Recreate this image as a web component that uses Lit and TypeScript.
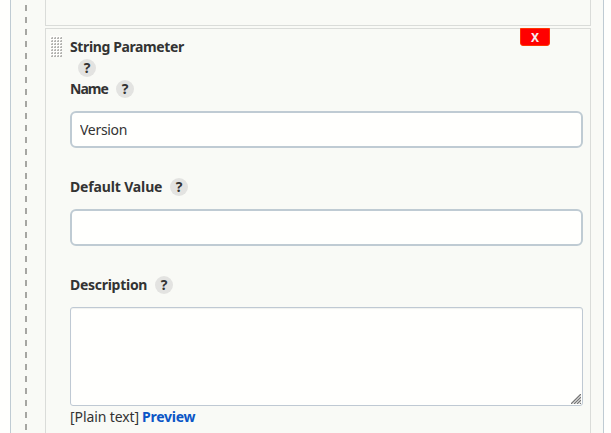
import { LitElement, html, css } from "lit";
import { customElement, property } from "lit/decorators.js";

@customElement("help-badge")
class HelpBadge extends LitElement {
  static styles = css`
    :host {
      display: flex;
      align-items: center;
      justify-content: center;
      width: 18px;
      height: 18px;
      border-radius: 50%;
      background: #e3e3e1;
      color: #333;
      font: 700 14px/18px "Noto Sans", sans-serif;
      flex: none;
    }
  `;
  render() {
    return html`?`;
  }
}

@customElement("field-label")
class FieldLabel extends LitElement {
  @property() text = "";
  static styles = css`
    :host {
      display: flex;
      align-items: center;
      gap: 8px;
      height: 18px;
      white-space: nowrap;
    }
    .text {
      font-weight: 700;
      letter-spacing: var(--track, -0.3px);
      width: var(--label-width);
    }
  `;
  render() {
    return html`<span class="text">${this.text}</span><help-badge></help-badge>`;
  }
}

@customElement("app-root")
class AppRoot extends LitElement {
  static styles = css`
    :host {
      display: block;
      height: 433px;
      overflow: hidden;
      background: #fffffd;
      color: #333;
      font: 14px/18px "Noto Sans", sans-serif;
    }
    * {
      box-sizing: border-box;
    }
    .panel {
      display: flex;
      height: 433px;
      width: 594px;
      margin-left: 10px;
      background: #f9faf6;
      border: solid #bfcbd3;
      border-width: 0 1px;
    }
    .rail {
      flex: none;
      width: 2px;
      margin: 5px 18px 0 14px;
      background: repeating-linear-gradient(#a6a6a2 0 6px, transparent 6px 11.965px);
    }
    .list {
      width: 546px;
      flex: none;
      display: flex;
      flex-direction: column;
      gap: 2px;
    }
    .previous {
      height: 26px;
      flex: none;
      border: 1px solid #dadcd9;
      border-top: 0;
    }
    .card {
      position: relative;
      flex: 1;
      border: 1px solid #dadcd9;
      border-bottom: 0;
      display: flex;
      padding: 0 7px 0 4px;
    }
    .grip {
      width: 12px;
      height: 21px;
      margin: 7px 8px 0 0;
      flex: none;
    }
    .body {
      flex: 1;
      display: flex;
      flex-direction: column;
      padding-top: 9px;
    }
    .title {
      font-weight: 700;
      letter-spacing: -0.38px;
      white-space: nowrap;
    }
    .title-help {
      margin: 3px 0 3px 8px;
    }
    .name {
      --label-width: 38px;
      --track: -0.95px;
    }
    .default {
      --label-width: 92px;
      --track: -0.15px;
    }
    .description {
      --label-width: 77px;
      --track: -0.28px;
    }
    .field {
      display: block;
      width: 513px;
      height: 37px;
      margin: 13px 0 30px;
      padding: 0 8px;
      border: 2px solid #bfcbd3;
      border-radius: 6px;
      background: #fffffd;
      color: #333;
      font: 14px "Noto Sans", sans-serif;
      letter-spacing: -0.3px;
      outline: none;
    }
    .area {
      position: relative;
      width: 513px;
      height: 99px;
      margin-top: 13px;
      border: 1px solid #bfc9d3;
      border-radius: 3px;
      background: #fffffd;
      box-shadow: inset 0 1px 1px #f0f1ef;
    }
    .resize {
      position: absolute;
      right: 1px;
      bottom: 1px;
      width: 10px;
      height: 10px;
    }
    .format {
      display: flex;
      gap: 3px;
      margin-top: 2px;
      white-space: nowrap;
    }
    .plain {
      width: 69px;
      letter-spacing: -0.1px;
    }
    .preview {
      color: #0b56c6;
      font-weight: 700;
      letter-spacing: -0.25px;
    }
    .delete {
      position: absolute;
      top: -1px;
      right: 40px;
      width: 30px;
      height: 18px;
      padding: 1px 0 0;
      border: 1px solid #ff3300;
      border-radius: 0 0 3px 3px;
      background: #f00;
      color: #f4eeee;
      font: 700 12px/16px "Noto Sans", sans-serif;
      text-align: center;
    }
  `;

  render() {
    return html`
      <div class="panel">
        <div class="rail"></div>
        <div class="list">
          <div class="previous"></div>
          <div class="card">
            <svg class="grip" viewBox="0 0 12 21">
              <defs>
                <pattern id="dots" width="3" height="3" patternUnits="userSpaceOnUse">
                  <rect width="3" height="3" fill="#fffffd" />
                  <rect x="1" y="1" width="2" height="2" fill="#dededb" />
                  <rect x="2" y="1" width="1" height="1" fill="#b4b4b1" />
                  <rect x="1" y="2" width="1" height="1" fill="#b4b4b1" />
                  <rect x="2" y="2" width="1" height="1" fill="#b4b4b1" />
                </pattern>
              </defs>
              <rect width="12" height="21" fill="url(#dots)" />
            </svg>
            <div class="body">
              <div class="title">String Parameter</div>
              <help-badge class="title-help"></help-badge>
              <field-label class="name" text="Name"></field-label>
              <input class="field" value="Version" />
              <field-label class="default" text="Default Value"></field-label>
              <input class="field" />
              <field-label class="description" text="Description"></field-label>
              <div class="area">
                <svg class="resize" viewBox="0 0 10 10" fill="none" stroke="#777" stroke-width="1.3">
                  <path d="M0 10L10 0M3 10L10 3M6 10L10 6M9 10L10 9" />
                </svg>
              </div>
              <div class="format">
                <span class="plain">[Plain text]</span>
                <span class="preview">Preview</span>
              </div>
            </div>
            <button class="delete">X</button>
          </div>
        </div>
      </div>
    `;
  }
}
